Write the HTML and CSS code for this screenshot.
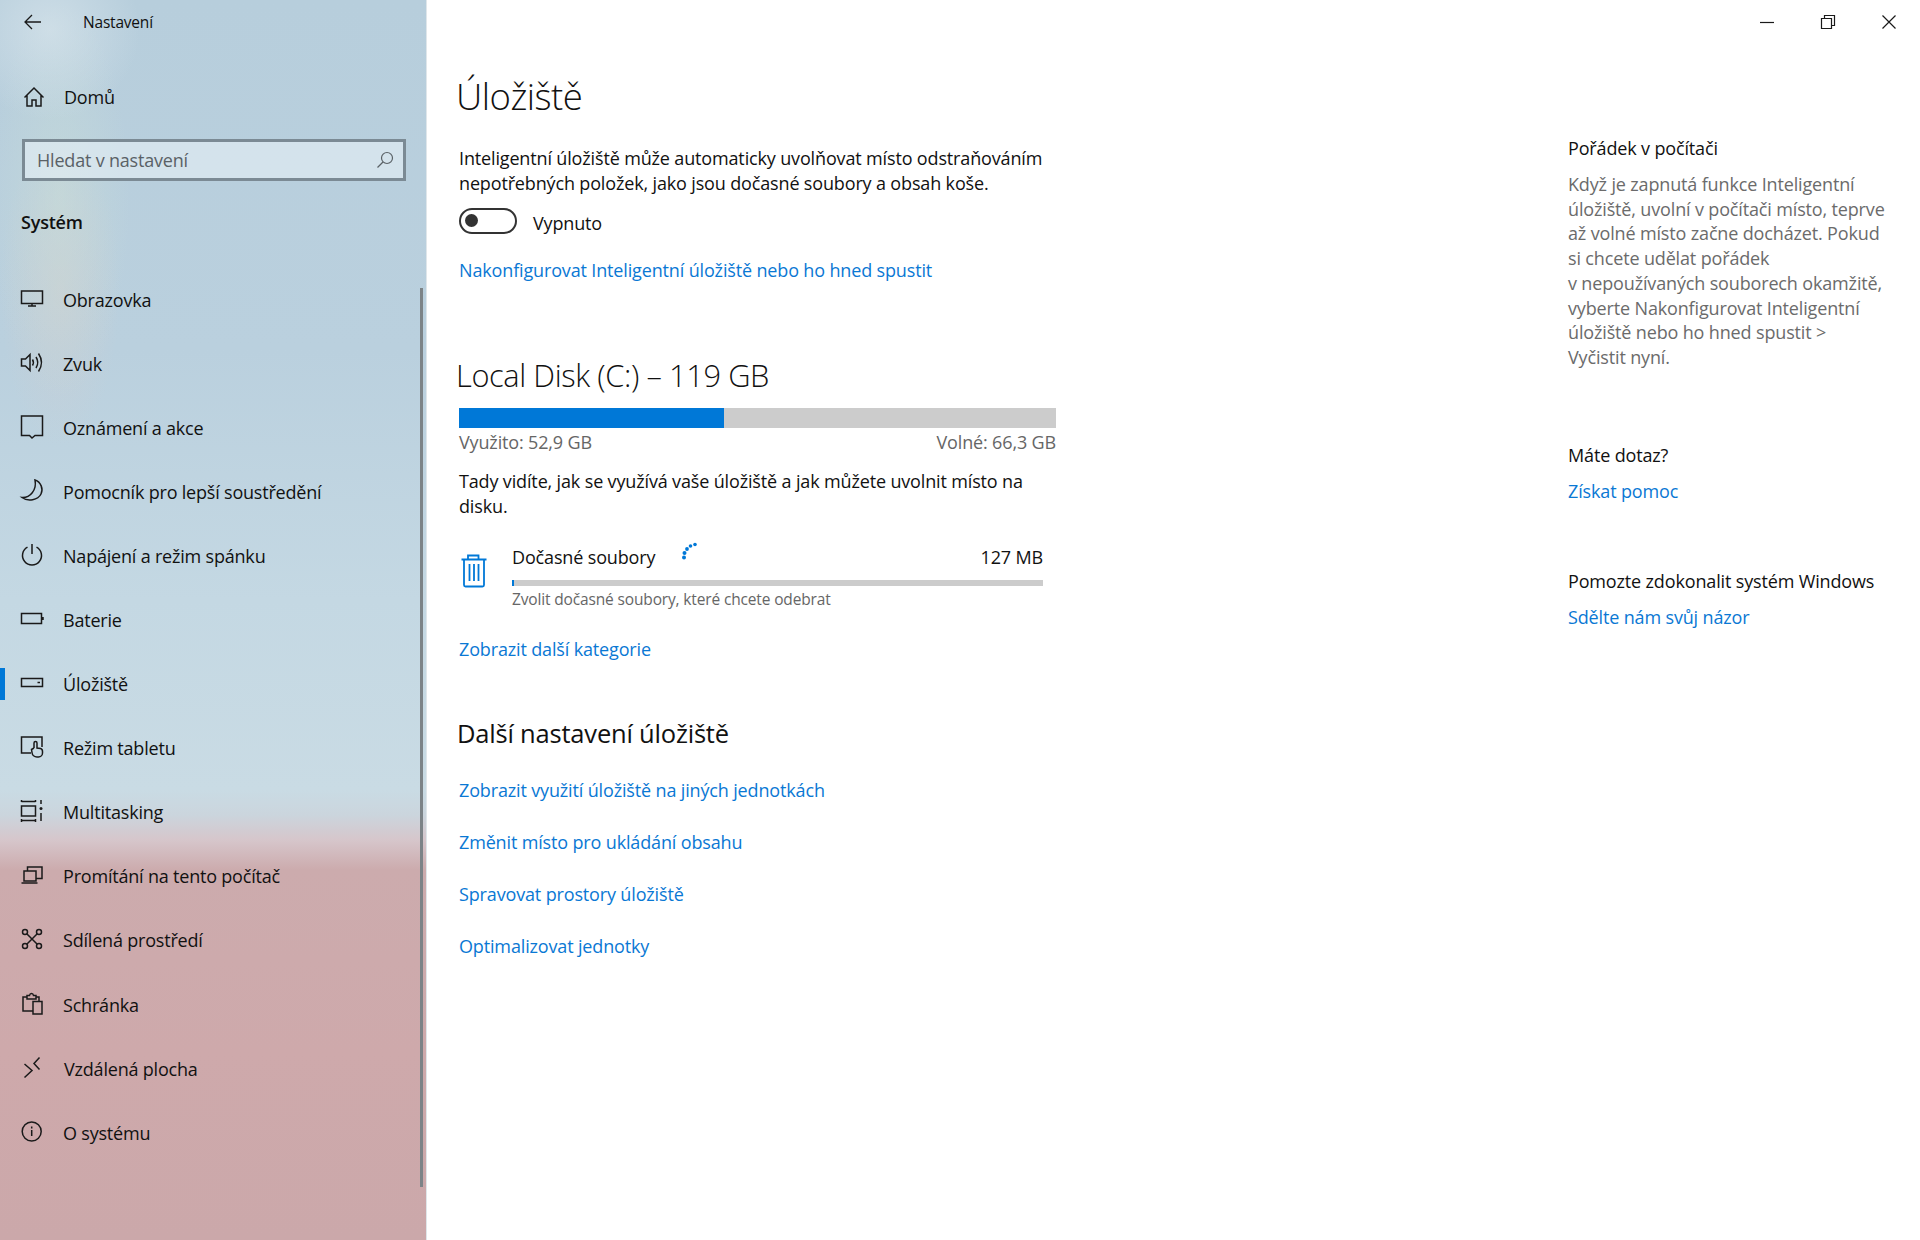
FILE: index.html
```html
<!DOCTYPE html>
<html lang="cs">
<head>
	<meta charset="UTF-8">
	<title>Nastavení</title>
	<link rel="stylesheet" href="styles.css">
</head>
<body>
<div class="app">
	<nav class="side">
		<div class="side_top">
			<svg class="back" width="20" height="18" viewBox="0 0 20 18"><path d="M18 9H2M9 2 2 9l7 7"/></svg>
			<span class="side_title">Nastavení</span>
		</div>
		<div class="home">
			<svg class="ico" width="24" height="24" viewBox="0 0 24 24"><path d="M2.500 12.500 12 3l9.500 9.500M5 10.500V21h5v-6h4v6h5V10.500"/></svg>
			<span>Domů</span>
		</div>
		<div class="search">
			<span>Hledat v nastavení</span>
			<svg class="ico" width="18" height="18" viewBox="0 0 18 18"><circle cx="11" cy="7" r="5.500"/><path d="M7 11 1.500 16.500"/></svg>
		</div>
		<div class="side_head">Systém</div>
		<ul class="menu">
			<li>
				<svg class="ico" width="24" height="24" viewBox="0 0 24 24"><path d="M1.500 5h21v12.500h-21zM12 17.500V20M8 20h8"/></svg>
				<span>Obrazovka</span>
			</li>
			<li>
				<svg class="ico" width="24" height="24" viewBox="0 0 24 24"><path d="M1.500 9v7h4l4.500 4.500v-16L5.500 9zM12.500 9.500q1.800 3 0 6M16 7q3.500 5.500 0 11M18.500 3.500q6 9 0 18"/></svg>
				<span>Zvuk</span>
			</li>
			<li>
				<svg class="ico" width="24" height="24" viewBox="0 0 24 24"><path d="M1.500 2h21v19.500H15L12 24l-2.500-2.500h-8z"/></svg>
				<span>Oznámení a akce</span>
			</li>
			<li>
				<svg class="ico" width="24" height="24" viewBox="0 0 24 24"><path d="M15 2c6 2 8.500 9 6 14C18 22 8 24 2 19.500 10 20 17 12 15 2z"/></svg>
				<span>Pomocník pro lepší soustředění</span>
			</li>
			<li>
				<svg class="ico" width="24" height="24" viewBox="0 0 24 24"><path d="M7.500 5.200a9.500 9.500 0 1 0 9 0M12 2v10"/></svg>
				<span>Napájení a režim spánku</span>
			</li>
			<li>
				<svg class="ico" width="24" height="24" viewBox="0 0 24 24"><path d="M1.500 7.500h20v10h-20zM23 11v3"/></svg>
				<span>Baterie</span>
			</li>
			<li class="active">
				<svg class="ico" width="24" height="24" viewBox="0 0 24 24"><path d="M1.500 8.500h21v8h-21zM17.500 12.500H20"/></svg>
				<span>Úložiště</span>
			</li>
			<li>
				<svg class="ico" width="24" height="24" viewBox="0 0 24 24"><path d="M11 19H1.500V3H22v10M14 14V9a1.500 1.500 0 0 1 3 0v5l3.500.5q2 .5 2 3V19a4 4 0 0 1-4 4H17a5 5 0 0 1-5-4.500l-.5-3 2.500-1.500"/></svg>
				<span>Režim tabletu</span>
			</li>
			<li>
				<svg class="ico" width="24" height="24" viewBox="0 0 24 24"><path d="M1.500 2v2M15.500 2v2M1.500 3.500h14M1.500 8h14v10h-14zM1.500 22.500h14M1.500 21v3M15.500 21v3M21 2v4M21 15v8"/><circle class="dot" cx="21" cy="10.500" r="1.500"/></svg>
				<span>Multitasking</span>
			</li>
			<li>
				<svg class="ico" width="24" height="24" viewBox="0 0 24 24"><path d="M7.500 9V5H22v11.500h-6M4 9h12v10H4zM1.500 21h16"/></svg>
				<span>Promítání na tento počítač</span>
			</li>
			<li>
				<svg class="ico" width="24" height="24" viewBox="0 0 24 24"><circle cx="5" cy="6" r="2.500"/><circle cx="19" cy="6" r="2.500"/><circle cx="5" cy="20" r="2.500"/><circle cx="19" cy="20" r="2.500"/><path d="M7 8l10 10M17 8 7 18"/></svg>
				<span>Sdílená prostředí</span>
			</li>
			<li>
				<svg class="ico" width="24" height="24" viewBox="0 0 24 24"><path d="M13 20H3V6h4M16 6h3v4M7 4.500h2.500q.3-2 2-2t2 2H16V8H7zM13 10.500h9V23h-9z"/></svg>
				<span>Schránka</span>
			</li>
			<li>
				<svg class="ico" width="24" height="24" viewBox="0 0 24 24"><path d="M4.500 9 12 15.500 4.500 22.500M19.500 2.500 14 8.500l5.500 6"/></svg>
				<span class="shift">Vzdálená plocha</span>
			</li>
			<li>
				<svg class="ico" width="24" height="24" viewBox="0 0 24 24"><circle cx="11.700" cy="12.500" r="9.500"/><path d="M11.700 11v6M11.700 7.500v2"/></svg>
				<span>O systému</span>
			</li>
		</ul>
		<div class="scrollbar"></div>
	</nav>

	<main class="main">
		<h1>Úložiště</h1>
		<p class="text">Inteligentní úložiště může automaticky uvolňovat místo odstraňováním<br>nepotřebných položek, jako jsou dočasné soubory a obsah koše.</p>
		<div class="toggle_row">
			<span class="toggle"></span>
			<span class="toggle_label">Vypnuto</span>
		</div>
		<a class="link first_link" href="#">Nakonfigurovat Inteligentní úložiště nebo ho hned spustit</a>

		<h2>Local Disk (C:) – 119 GB</h2>
		<div class="bar"><div class="bar_fill"></div></div>
		<div class="bar_labels">
			<span>Využito: 52,9 GB</span>
			<span>Volné: 66,3 GB</span>
		</div>
		<p class="text usage">Tady vidíte, jak se využívá vaše úložiště a jak můžete uvolnit místo na<br>disku.</p>

		<div class="cat">
			<svg class="trash" width="26" height="34" viewBox="0 0 26 34"><path d="M7 5V1.500h10.500V5M.5 5.500h25M3 5.500V31a1.500 1.500 0 0 0 1.500 1.500h17A1.500 1.500 0 0 0 23 31V5.500M8.500 10v17M13 10v17M17.500 10v17"/></svg>
			<div class="cat_body">
				<div class="cat_head">
					<span>Dočasné soubory</span>
					<svg class="spinner" width="18" height="20" viewBox="0 0 18 20"><circle cx="3" cy="16.500" r="2"/><circle cx="3.500" cy="12" r="2"/><circle cx="6" cy="8" r="1.900"/><circle cx="9.500" cy="5" r="1.800"/><circle cx="14" cy="3.500" r="1.800"/></svg>
					<span class="cat_size">127 MB</span>
				</div>
				<div class="cat_bar"><div class="cat_fill"></div></div>
				<div class="cat_note">Zvolit dočasné soubory, které chcete odebrat</div>
			</div>
		</div>
		<a class="link more_link" href="#">Zobrazit další kategorie</a>

		<h3>Další nastavení úložiště</h3>
		<a class="link other" href="#">Zobrazit využití úložiště na jiných jednotkách</a>
		<a class="link other" href="#">Změnit místo pro ukládání obsahu</a>
		<a class="link other" href="#">Spravovat prostory úložiště</a>
		<a class="link other" href="#">Optimalizovat jednotky</a>
	</main>

	<aside class="aside">
		<div class="win">
			<svg width="16" height="16" viewBox="0 0 16 16"><path d="M1 8.500h14"/></svg>
			<svg width="16" height="16" viewBox="0 0 16 16"><path d="M1.500 4.500h10v10h-10zM4.500 4.500v-3h10v10h-3"/></svg>
			<svg width="16" height="16" viewBox="0 0 16 16"><path d="M1.500 1.500l13 13M14.500 1.500l-13 13"/></svg>
		</div>
		<h4 class="tidy">Pořádek v počítači</h4>
		<p class="gray">Když je zapnutá funkce Inteligentní<br>úložiště, uvolní v počítači místo, teprve<br>až volné místo začne docházet. Pokud<br>si chcete udělat pořádek<br>v nepoužívaných souborech okamžitě,<br>vyberte Nakonfigurovat Inteligentní<br>úložiště nebo ho hned spustit &gt;<br>Vyčistit nyní.</p>
		<h4 class="ask">Máte dotaz?</h4>
		<a class="link" href="#">Získat pomoc</a>
		<h4 class="improve">Pomozte zdokonalit systém Windows</h4>
		<a class="link" href="#">Sdělte nám svůj názor</a>
	</aside>
</div>
</body>
</html>
```

FILE: styles.css
```css
* {
	box-sizing: border-box;
}
html, body {
	height: 100%;
}
body {
	margin: 0;
	background: #fff;
	color: #111;
	font-family: "Open Sans", "Noto Sans", sans-serif;
	font-size: 18px;
	letter-spacing: -0.15px;
	overflow: hidden;
}
h1, h2, h3, h4, p, ul {
	margin: 0;
	padding: 0;
	font-weight: 400;
}
svg {
	fill: none;
	stroke: #1a1a1a;
	stroke-width: 1.5;
	flex: none;
	overflow: visible;
}
.app {
	display: grid;
	grid-template-columns: 427px 1141px 1fr;
	height: 1240px;
}

/* sidebar */
.side {
	position: relative;
	letter-spacing: -0.2px;
	background:
		radial-gradient(circle at 50px 30px, rgba(215,228,235,.7), rgba(215,228,235,0) 90px),
		radial-gradient(ellipse at 60px 200px, rgba(205,225,215,.45), rgba(205,225,215,0) 70px),
		radial-gradient(ellipse at 60px 290px, rgba(210,205,205,.5), rgba(210,205,205,0) 60px),
		linear-gradient(180deg, #b7cedc 0, #bad0de 350px, #c4d8e3 600px, #c9dbe4 790px, #cbd5dd 815px, #d6c6cb 840px, #ccabad 870px, #cea9ab 1050px, #cba8aa 1240px);
	border-right: 1px solid #dfe6ea;
}
.side_top {
	display: flex;
	align-items: center;
	height: 44px;
	padding-left: 23px;
	font-size: 15.500px;
}
.side_title {
	margin-left: 40px;
}
.back {
	stroke-width: 1.3;
}
.home {
	display: flex;
	align-items: center;
	gap: 18px;
	margin-top: 32px;
	padding-left: 22px;
	height: 42px;
}
.search {
	display: flex;
	align-items: center;
	justify-content: space-between;
	margin: 21px 22px 0;
	padding: 0 9px 0 12px;
	width: 384px;
	height: 42px;
	border: 3px solid #7b8a94;
	background: rgba(230,240,246,.6);
	color: #5a6166;
}
.search svg {
	stroke: #5a6166;
	stroke-width: 1.2;
}
.side_head {
	margin: 26px 0 0 21px;
	height: 30px;
	line-height: 30px;
	font-weight: 600;
}
.menu {
	list-style: none;
	margin-top: 31px;
}
.menu li {
	position: relative;
	display: flex;
	align-items: center;
	gap: 19px;
	padding-left: 20px;
	height: 64.050px;
}
.menu .ico {
	margin-top: -4px;
}
.menu .dot {
	fill: #1a1a1a;
	stroke: none;
}
.menu .active::before {
	content: "";
	position: absolute;
	left: 0;
	top: 16px;
	width: 5px;
	height: 32px;
	background: #0078d7;
}
.shift {
	margin-left: 1px;
}
.scrollbar {
	position: absolute;
	right: 3px;
	top: 288px;
	bottom: 53px;
	width: 3px;
	background: #7c8387;
}

/* content */
.main {
	padding: 0 0 0 32px;
}
.text {
	line-height: 25px;
}
h1 {
	margin: 66px 0 0 -3px;
	font-size: 36.500px;
	font-weight: 300;
	line-height: 60px;
	letter-spacing: -0.5px;
}
.main h1 + .text {
	margin-top: 20px;
}
.toggle_row {
	display: flex;
	align-items: center;
	gap: 16px;
	margin-top: 10px;
	height: 28px;
}
.toggle_label {
	margin-top: 5px;
}
.toggle {
	position: relative;
	width: 58px;
	height: 26px;
	margin-top: 2px;
	border: 2.500px solid #333;
	border-radius: 13px;
}
.toggle::after {
	content: "";
	position: absolute;
	left: 4px;
	top: 4px;
	width: 13px;
	height: 13px;
	border-radius: 50%;
	background: #333;
}
.link {
	display: block;
	color: #0a78d4;
	text-decoration: none;
	line-height: 25px;
}
.first_link {
	margin-top: 24px;
}
h2 {
	margin: 70px 0 0 -3px;
	font-size: 30.800px;
	font-weight: 300;
	line-height: 44px;
	letter-spacing: -0.4px;
}
.bar {
	width: 597px;
	height: 20px;
	margin-top: 11px;
	background: #ccc;
}
.bar_fill {
	width: 265px;
	height: 100%;
	background: #0078d7;
}
.bar_labels {
	display: flex;
	justify-content: space-between;
	width: 597px;
	margin-top: 2px;
	line-height: 24px;
	color: #666;
}
.usage {
	margin-top: 15px;
}
.cat {
	display: flex;
	align-items: flex-start;
	gap: 27px;
	margin-top: 25px;
}
.trash {
	stroke: #0078d7;
	stroke-width: 1.8;
	margin: 10px 0 0 2px;
}
.cat_body {
	width: 531px;
	margin-left: -2px;
}
.cat_head {
	display: flex;
	align-items: center;
	height: 26px;
}
.spinner {
	margin: -12px 0 0 26px;
	fill: #0078d7;
	stroke: none;
}
.cat_size {
	margin-left: auto;
}
.cat_bar {
	height: 6px;
	margin-top: 10px;
	background: #ccc;
}
.cat_fill {
	width: 2px;
	height: 100%;
	background: #0078d7;
}
.cat_note {
	margin-top: 2px;
	font-size: 15.500px;
	line-height: 22px;
	color: #666;
}
.more_link {
	margin-top: 27px;
}
h3 {
	margin: 54px 0 0 -2px;
	font-size: 25.500px;
	line-height: 34px;
	letter-spacing: -0.2px;
}
.other {
	margin-top: 27px;
}
h3 + .other {
	margin-top: 28px;
}

/* right column */
.win {
	display: flex;
	justify-content: flex-end;
	gap: 45px;
	height: 44px;
	padding: 14px 23px 0 0;
}
.win svg {
	stroke-width: 1.2;
}
.tidy {
	margin-top: 92px;
	line-height: 25px;
}
.gray {
	margin-top: 11px;
	line-height: 24.700px;
	color: #6b6b6b;
}
.ask {
	margin-top: 73px;
	line-height: 25px;
}
.ask + .link {
	margin-top: 11px;
}
.improve {
	margin-top: 65px;
	line-height: 25px;
}
.improve + .link {
	margin-top: 11px;
}
```
